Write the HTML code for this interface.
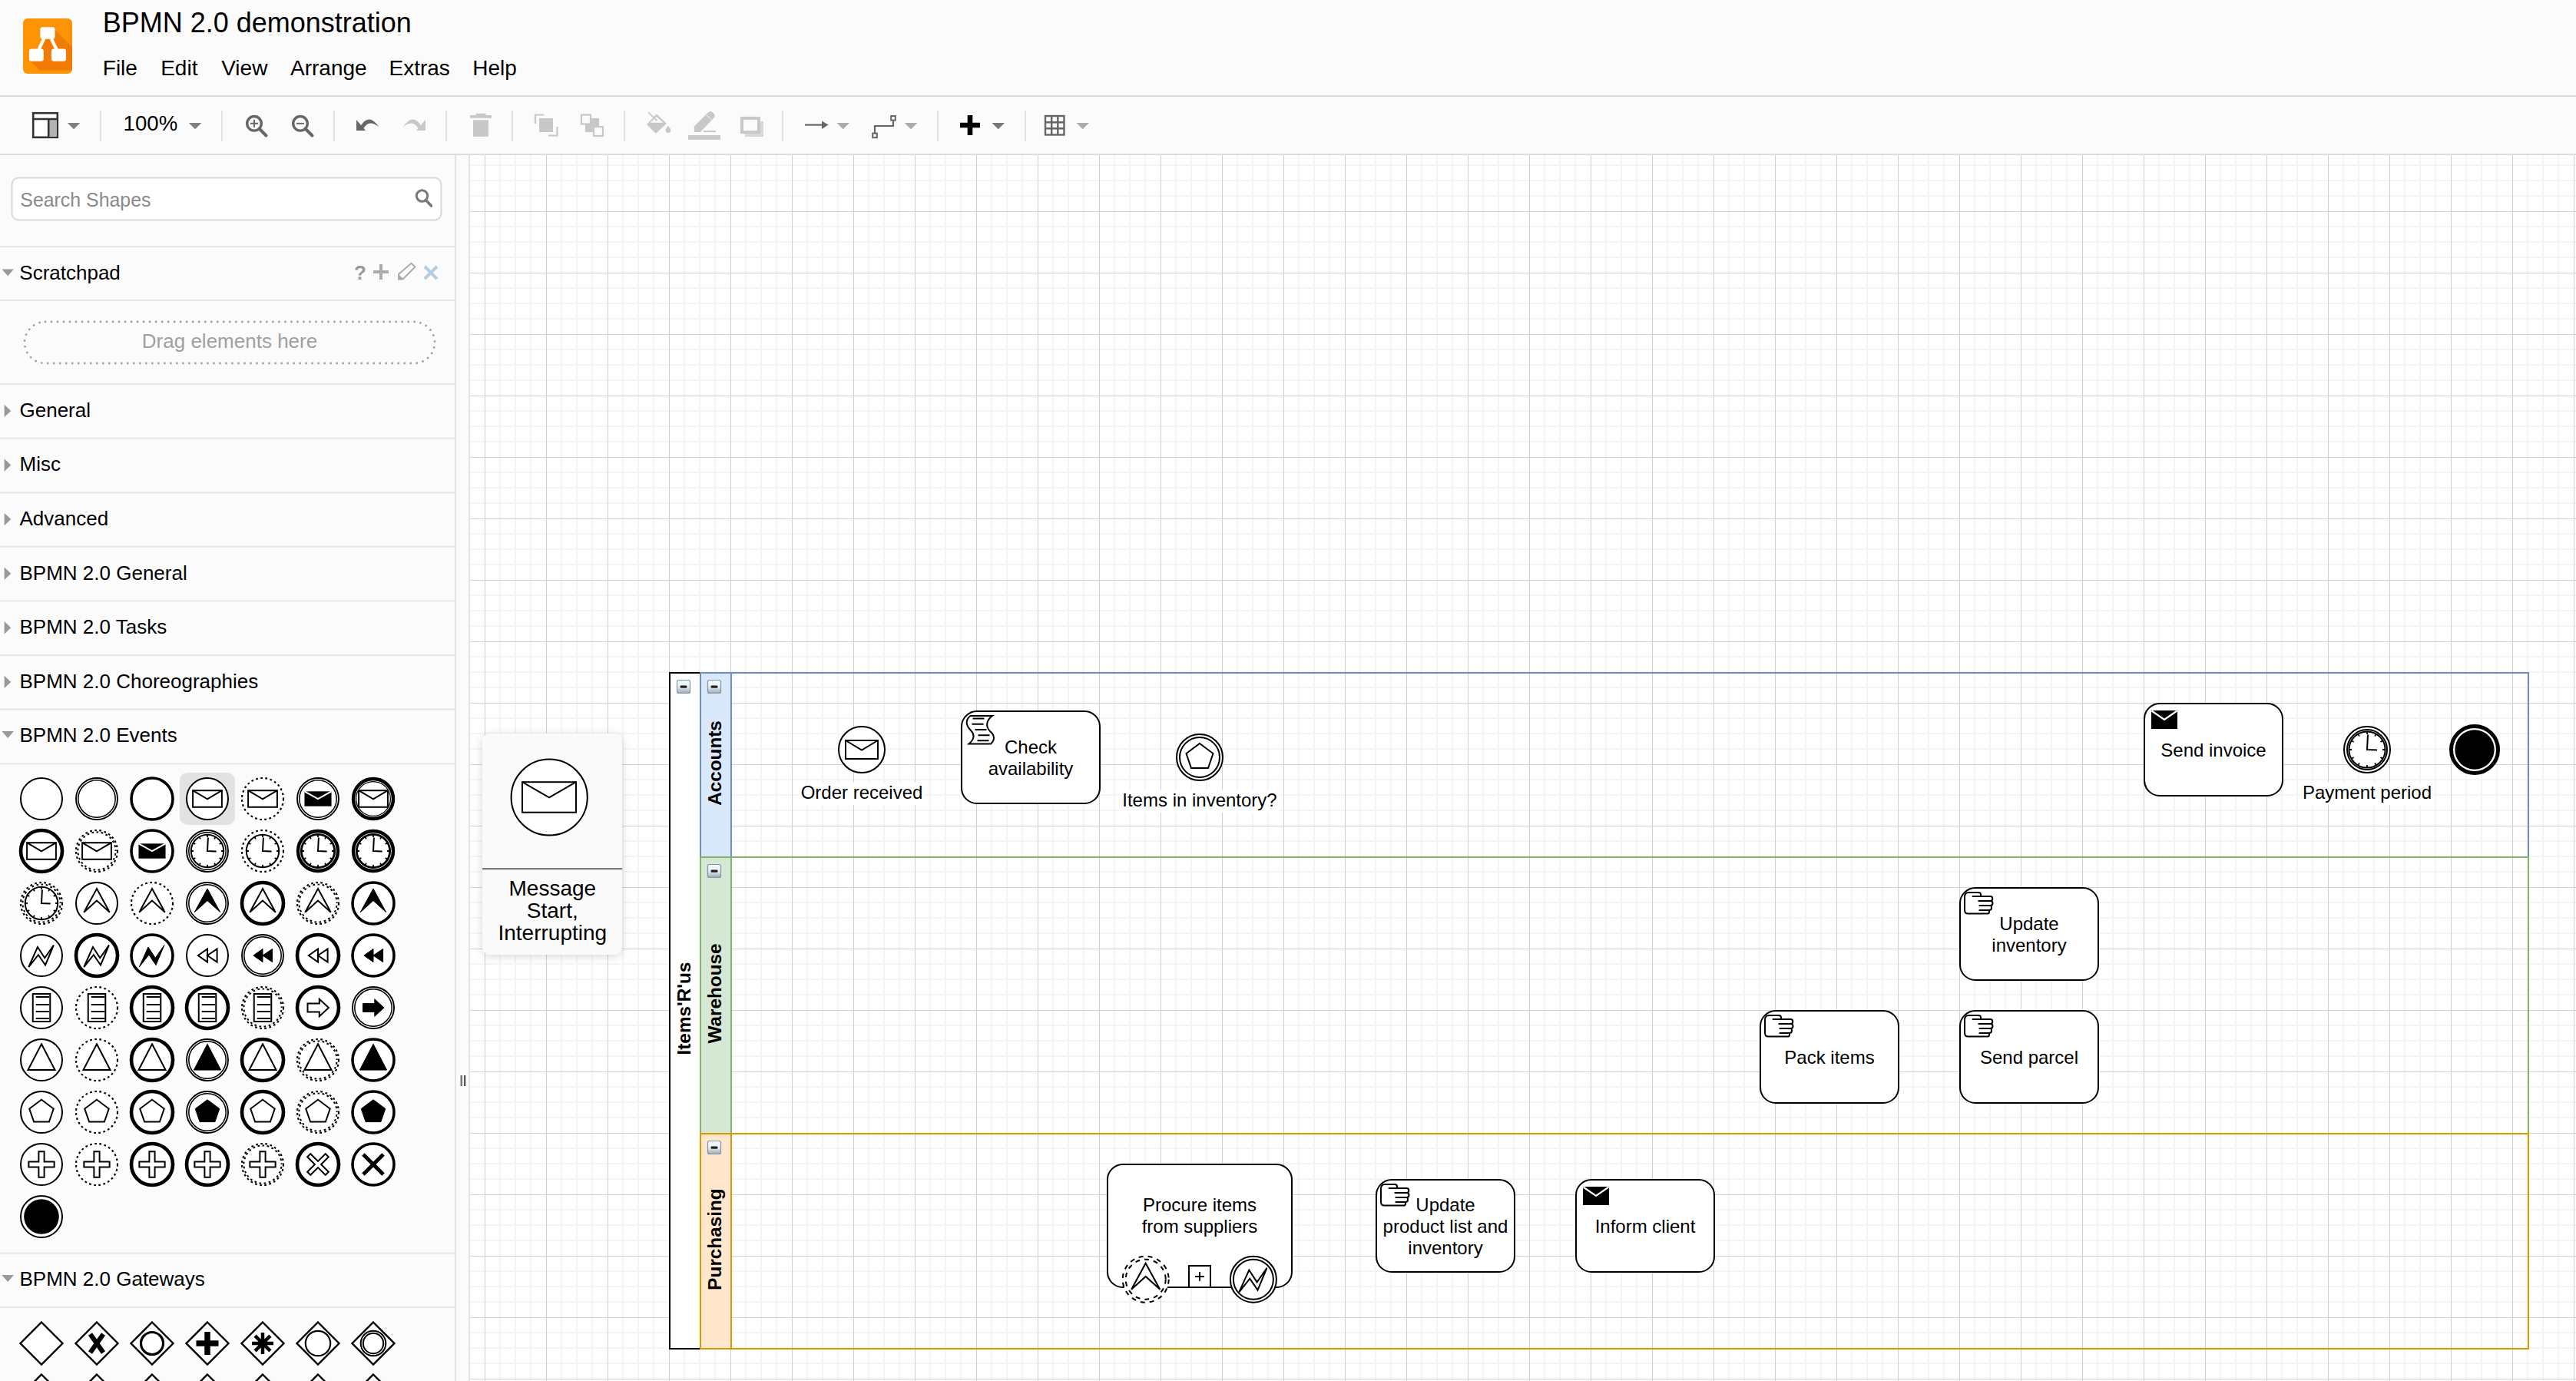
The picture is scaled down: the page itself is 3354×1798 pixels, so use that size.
<!DOCTYPE html><html><head><meta charset="utf-8"><title>BPMN 2.0 demonstration</title><style>html,body{margin:0;padding:0;width:3354px;height:1798px;overflow:hidden;background:#fbfbfb;font-family:"Liberation Sans", sans-serif}</style></head><body><svg width="3354" height="1798" viewBox="0 0 3354 1798" style="display:block;font-family:'Liberation Sans', sans-serif"><rect x="0" y="0" width="3354" height="1798" fill="#fbfbfb"/>
<g><rect x="30" y="24" width="64" height="72" rx="6" ry="6" fill="#fd9305"/><clipPath id="logoclip"><rect x="30" y="24" width="64" height="72" rx="6" ry="6"/></clipPath><polygon clip-path="url(#logoclip)" points="71.5,38.5 94,61 94,91.6 51.8,91.6 37.9,77.7 37.9,63.6 47.5,63.6 55.5,50.8 71.5,50.8" fill="#f07c03"/><path d="M57.2,50.5 L50.4,64.5 M66.8,50.5 L73.8,64.5" stroke="#fff" stroke-width="4.2"/><rect x="52.4" y="35.2" width="19.1" height="15.6" rx="3.2" fill="#fff"/><rect x="37.9" y="63.6" width="18.9" height="16.2" rx="3.2" fill="#fff"/><rect x="66.9" y="63.6" width="19.1" height="16.2" rx="3.2" fill="#fff"/></g>
<text x="133.7" y="41.9" font-size="36" fill="#000" text-anchor="start" font-weight="normal" >BPMN 2.0 demonstration</text>
<text x="133.8" y="98" font-size="28" fill="#000" text-anchor="start" font-weight="normal" >File</text>
<text x="209.2" y="98" font-size="28" fill="#000" text-anchor="start" font-weight="normal" >Edit</text>
<text x="288.2" y="98" font-size="28" fill="#000" text-anchor="start" font-weight="normal" >View</text>
<text x="378" y="98" font-size="28" fill="#000" text-anchor="start" font-weight="normal" >Arrange</text>
<text x="506.5" y="98" font-size="28" fill="#000" text-anchor="start" font-weight="normal" >Extras</text>
<text x="615.2" y="98" font-size="28" fill="#000" text-anchor="start" font-weight="normal" >Help</text>
<rect x="0" y="124" width="3354" height="2" fill="#dadce0"/>
<rect x="0" y="200" width="3354" height="2" fill="#dadce0"/>
<rect x="130" y="144" width="2" height="40" fill="#e2e2e2"/>
<rect x="288" y="144" width="2" height="40" fill="#e2e2e2"/>
<rect x="434" y="144" width="2" height="40" fill="#e2e2e2"/>
<rect x="580" y="144" width="2" height="40" fill="#e2e2e2"/>
<rect x="666" y="144" width="2" height="40" fill="#e2e2e2"/>
<rect x="812" y="144" width="2" height="40" fill="#e2e2e2"/>
<rect x="1018" y="144" width="2" height="40" fill="#e2e2e2"/>
<rect x="1220" y="144" width="2" height="40" fill="#e2e2e2"/>
<rect x="1334" y="144" width="2" height="40" fill="#e2e2e2"/>
<rect x="43.2" y="147.2" width="31.6" height="31.6" fill="#fff" stroke="#333" stroke-width="2.6"/><rect x="64" y="156" width="10" height="22" fill="#b3b3b3"/><path d="M43,155 L75,155 M63.2,155 L63.2,179" stroke="#333" stroke-width="2.6"/>
<polygon points="87.8,160 104.3,160 96.05,168.3" fill="#808080"/>
<text x="160.6" y="170" font-size="27.6" fill="#000" text-anchor="start" font-weight="normal" >100%</text>
<polygon points="245.8,160 262.3,160 254.05,168.3" fill="#808080"/>
<circle cx="331" cy="160.8" r="9.3" fill="none" stroke="#666" stroke-width="3.4"/><path d="M337.5,167.5 L346.5,176.5" stroke="#666" stroke-width="4" stroke-linecap="round"/><path d="M326,160.8 L336,160.8 M331,155.8 L331,165.8" stroke="#666" stroke-width="1.9"/>
<circle cx="391" cy="160.8" r="9.3" fill="none" stroke="#666" stroke-width="3.4"/><path d="M397.5,167.5 L406.5,176.5" stroke="#666" stroke-width="4" stroke-linecap="round"/><path d="M386,160.8 L396,160.8" stroke="#666" stroke-width="1.9"/>
<path d="M464,156 L464,170 L476,170 Z" fill="#666"/><path d="M467.5,168 Q479,144.5 493.5,165.5 Q479,153.5 472,170 Z" fill="#666"/>
<g transform="translate(1078,0) scale(-1,1)"><path d="M524,156 L524,170 L536,170 Z" fill="#c8c8c8"/><path d="M527.5,168 Q539,144.5 553.5,165.5 Q539,153.5 532,170 Z" fill="#c8c8c8"/></g>
<rect x="619.5" y="147.8" width="13" height="3" fill="#c8c8c8"/><rect x="612" y="150" width="28" height="3.8" fill="#c8c8c8"/><rect x="616" y="156.3" width="20" height="21.5" fill="#c8c8c8"/>
<path d="M697,161 L697,149.5 L708.5,149.5 M714,176.5 L725.5,176.5 L725.5,165" fill="none" stroke="#c8c8c8" stroke-width="2.2"/><rect x="702" y="154" width="18" height="18" fill="#c8c8c8"/>
<rect x="762" y="154" width="18" height="18" fill="#c8c8c8"/><rect x="757" y="149.5" width="12" height="12" fill="#fbfbfb" stroke="#c8c8c8" stroke-width="2.2"/><rect x="773" y="165" width="12" height="12" fill="#fbfbfb" stroke="#c8c8c8" stroke-width="2.2"/>
<path d="M842,162 L854.8,148.6 L868,160.8 L853.8,173.7 Z" fill="#c8c8c8"/><path d="M846.5,159.8 L854.8,151.8 L863.6,159.8 Z" fill="#fbfbfb"/><path d="M844.2,146.3 L855.4,157.2" stroke="#c8c8c8" stroke-width="1.8"/><path d="M869.9,163.5 L866.8,168.5 L873,168.5 Z" fill="#c8c8c8"/><circle cx="869.9" cy="169.7" r="3.3" fill="#c8c8c8"/>
<path d="M903.9,172 L903.9,164.4 L921.5,146.8 Q925.2,143.3 928.8,146.9 Q932.3,150.5 928.8,154.2 L911.8,172 Z" fill="#c8c8c8"/><path d="M919.8,149.9 L925.7,155.2" stroke="#fbfbfb" stroke-width="1"/><rect x="896" y="176" width="42" height="5.9" fill="#c8c8c8"/><rect x="916" y="170" width="16" height="2" fill="#c8c8c8"/>
<rect x="970" y="158" width="24" height="20" fill="#d9d9d9"/><rect x="966" y="153.9" width="22" height="18.2" fill="#fbfbfb" stroke="#c8c8c8" stroke-width="4"/>
<path d="M1048,162.6 L1072,162.6" stroke="#666" stroke-width="2.2"/><polygon points="1070,157.5 1078.5,162.6 1070,168" fill="#666"/>
<polygon points="1089.5,160 1106.0,160 1097.75,168.3" fill="#ababab"/>
<path d="M1139,175 L1139,164 L1163,164 L1163,154" fill="none" stroke="#666" stroke-width="2.2"/><rect x="1136.2" y="173.6" width="5.6" height="5.6" fill="#fbfbfb" stroke="#666" stroke-width="2"/><rect x="1160.2" y="151" width="5.6" height="5.6" fill="#fbfbfb" stroke="#666" stroke-width="2"/>
<polygon points="1177.8,160 1194.3,160 1186.05,168.3" fill="#ababab"/>
<path d="M1263,150 L1263,176 M1250,163 L1276,163" stroke="#000" stroke-width="6.6"/>
<polygon points="1291.5,160 1308.0,160 1299.75,168.3" fill="#777"/>
<rect x="1361" y="151" width="24.5" height="24.5" fill="none" stroke="#666" stroke-width="2.4"/><path d="M1369.2,151 L1369.2,175.5 M1377.3,151 L1377.3,175.5 M1361,159.2 L1385.5,159.2 M1361,167.3 L1385.5,167.3" stroke="#666" stroke-width="2.4"/>
<polygon points="1401.5,160 1418.0,160 1409.75,168.3" fill="#ababab"/>
<rect x="592" y="202" width="2" height="1596" fill="#e2e2e2"/>
<rect x="610" y="202" width="2" height="1596" fill="#e5e5e5"/>
<rect x="599.5" y="1400" width="2.6" height="14" fill="#777"/><rect x="604" y="1400" width="2.3" height="14" fill="#555"/>
<rect x="15.5" y="231.5" width="559" height="55" rx="9" fill="#fff" stroke="#d9d9d9" stroke-width="2"/>
<text x="26.3" y="268.6" font-size="24.9" fill="#8a8a8a" text-anchor="start" font-weight="normal" >Search Shapes</text>
<circle cx="549.5" cy="255" r="7.2" fill="none" stroke="#787878" stroke-width="3"/><path d="M554.5,260.5 L561.5,268" stroke="#787878" stroke-width="3.6" stroke-linecap="round"/>
<rect x="0" y="320" width="592" height="2" fill="#e6e6e6"/>
<polygon points="2.4,350.4 18,350.4 10.2,359.3" fill="#999"/>
<text x="25.3" y="364" font-size="26" fill="#000" text-anchor="start" font-weight="normal" >Scratchpad</text>
<text x="461" y="363.8" font-size="26" fill="#999" text-anchor="start" font-weight="bold" >?</text>
<path d="M496,344 L496,364 M486,354 L506,354" stroke="#ababab" stroke-width="4"/>
<path d="M519,363.5 L519,357 L535.5,342.8 L540.5,347.5 L524.5,363.5 Z" fill="none" stroke="#ababab" stroke-width="2"/><path d="M519,357 L519,363.5 L525.5,363.5 Z" fill="#ababab"/>
<path d="M553,347 L569,363 M569,347 L553,363" stroke="#b5cde3" stroke-width="4"/>
<rect x="0" y="390" width="592" height="2" fill="#e6e6e6"/>
<rect x="32" y="419" width="534" height="54" rx="27" fill="none" stroke="#a0a0a0" stroke-width="2.8" stroke-dasharray="0.01 8" stroke-linecap="round"/>
<text x="299" y="452.7" font-size="26" fill="#a0a0a0" text-anchor="middle" font-weight="normal" >Drag elements here</text>
<rect x="0" y="499.0" width="592" height="2" fill="#e6e6e6"/>
<polygon points="5.6,526.7 14.3,534.9 5.6,543.1" fill="#999"/>
<text x="25.5" y="542.8" font-size="26" fill="#000" text-anchor="start" font-weight="normal" >General</text>
<rect x="0" y="569.6" width="592" height="2" fill="#e6e6e6"/>
<polygon points="5.6,597.3000000000001 14.3,605.5 5.6,613.7" fill="#999"/>
<text x="25.5" y="613.4" font-size="26" fill="#000" text-anchor="start" font-weight="normal" >Misc</text>
<rect x="0" y="640.2" width="592" height="2" fill="#e6e6e6"/>
<polygon points="5.6,667.9000000000001 14.3,676.1 5.6,684.3000000000001" fill="#999"/>
<text x="25.5" y="684.0" font-size="26" fill="#000" text-anchor="start" font-weight="normal" >Advanced</text>
<rect x="0" y="710.8" width="592" height="2" fill="#e6e6e6"/>
<polygon points="5.6,738.5 14.3,746.6999999999999 5.6,754.9" fill="#999"/>
<text x="25.5" y="754.6" font-size="26" fill="#000" text-anchor="start" font-weight="normal" >BPMN 2.0 General</text>
<rect x="0" y="781.4" width="592" height="2" fill="#e6e6e6"/>
<polygon points="5.6,809.1 14.3,817.3 5.6,825.5" fill="#999"/>
<text x="25.5" y="825.2" font-size="26" fill="#000" text-anchor="start" font-weight="normal" >BPMN 2.0 Tasks</text>
<rect x="0" y="852.0" width="592" height="2" fill="#e6e6e6"/>
<polygon points="5.6,879.7 14.3,887.9 5.6,896.1" fill="#999"/>
<text x="25.5" y="895.8" font-size="26" fill="#000" text-anchor="start" font-weight="normal" >BPMN 2.0 Choreographies</text>
<rect x="0" y="922.6" width="592" height="2" fill="#e6e6e6"/>
<polygon points="2.4,952.0999999999999 18,952.0999999999999 10.2,960.9999999999999" fill="#999"/>
<text x="25.5" y="966.4" font-size="26" fill="#000" text-anchor="start" font-weight="normal" >BPMN 2.0 Events</text>
<rect x="0" y="993.2" width="592" height="2" fill="#e6e6e6"/>
<rect x="234" y="1006" width="72" height="68" rx="10" fill="#e2e2e2"/>
<circle cx="54.00" cy="1040.00" r="27.00" fill="#fff"/><circle cx="54.00" cy="1040.00" r="27.00" fill="none" stroke="#000" stroke-width="2" />

<circle cx="126.00" cy="1040.00" r="27.00" fill="#fff"/><circle cx="126.00" cy="1040.00" r="27.00" fill="none" stroke="#000" stroke-width="1.9" /><circle cx="126.00" cy="1040.00" r="24.20" fill="none" stroke="#000" stroke-width="1.5" />

<circle cx="198.00" cy="1040.00" r="27.00" fill="#fff"/><circle cx="198.00" cy="1040.00" r="27.00" fill="none" stroke="#000" stroke-width="3.6" />

<circle cx="270.00" cy="1040.00" r="27.00" fill="#fff"/><circle cx="270.00" cy="1040.00" r="27.00" fill="none" stroke="#000" stroke-width="2" />
<rect x="251.10" y="1029.20" width="37.80" height="21.60" fill="none" stroke="#000" stroke-width="2"/><path d="M251.10,1029.20 L270.00,1040.45 L288.90,1029.20" fill="none" stroke="#000" stroke-width="2"/>
<circle cx="342.00" cy="1040.00" r="27.00" fill="#fff"/><circle cx="342.00" cy="1040.00" r="27.00" fill="none" stroke="#000" stroke-width="2.2" stroke-dasharray="2.70 3.50"/>
<rect x="323.10" y="1029.20" width="37.80" height="21.60" fill="none" stroke="#000" stroke-width="2"/><path d="M323.10,1029.20 L342.00,1040.45 L360.90,1029.20" fill="none" stroke="#000" stroke-width="2"/>
<circle cx="414.00" cy="1040.00" r="27.00" fill="#fff"/><circle cx="414.00" cy="1040.00" r="27.00" fill="none" stroke="#000" stroke-width="1.9" /><circle cx="414.00" cy="1040.00" r="24.20" fill="none" stroke="#000" stroke-width="1.5" />
<rect x="396.45" y="1030.33" width="35.10" height="19.35" fill="#000"/><path d="M396.45,1030.33 L414.00,1040.23 L431.55,1030.33" fill="none" stroke="#fff" stroke-width="1.9800000000000002"/>
<circle cx="486.00" cy="1040.00" r="27.00" fill="#fff"/><circle cx="486.00" cy="1040.00" r="26.00" fill="none" stroke="#000" stroke-width="4.4" /><circle cx="486.00" cy="1040.00" r="22.40" fill="none" stroke="#000" stroke-width="1.3" />
<rect x="467.10" y="1029.20" width="37.80" height="21.60" fill="none" stroke="#000" stroke-width="2"/><path d="M467.10,1029.20 L486.00,1040.45 L504.90,1029.20" fill="none" stroke="#000" stroke-width="2"/>
<circle cx="54.00" cy="1108.00" r="27.00" fill="#fff"/><circle cx="54.00" cy="1108.00" r="27.00" fill="none" stroke="#000" stroke-width="4.6" />
<rect x="35.10" y="1097.20" width="37.80" height="21.60" fill="none" stroke="#000" stroke-width="2"/><path d="M35.10,1097.20 L54.00,1108.45 L72.90,1097.20" fill="none" stroke="#000" stroke-width="2"/>
<circle cx="126.00" cy="1108.00" r="27.00" fill="#fff"/><circle cx="126.00" cy="1108.00" r="27.00" fill="none" stroke="#000" stroke-width="2.2" stroke-dasharray="2.70 3.50"/><circle cx="126.00" cy="1108.00" r="24.60" fill="none" stroke="#000" stroke-width="2" stroke-dasharray="2.70 3.50" stroke-dashoffset="3.10"/>
<rect x="107.10" y="1097.20" width="37.80" height="21.60" fill="none" stroke="#000" stroke-width="2"/><path d="M107.10,1097.20 L126.00,1108.45 L144.90,1097.20" fill="none" stroke="#000" stroke-width="2"/>
<circle cx="198.00" cy="1108.00" r="27.00" fill="#fff"/><circle cx="198.00" cy="1108.00" r="27.00" fill="none" stroke="#000" stroke-width="3.6" />
<rect x="180.45" y="1098.33" width="35.10" height="19.35" fill="#000"/><path d="M180.45,1098.33 L198.00,1108.23 L215.55,1098.33" fill="none" stroke="#fff" stroke-width="1.9800000000000002"/>
<circle cx="270.00" cy="1108.00" r="27.00" fill="#fff"/><circle cx="270.00" cy="1108.00" r="27.00" fill="none" stroke="#000" stroke-width="1.9" /><circle cx="270.00" cy="1108.00" r="24.20" fill="none" stroke="#000" stroke-width="1.5" />
<circle cx="270.00" cy="1108.00" r="21.24" fill="#fff" stroke="#000" stroke-width="2"/><path d="M291.24,1108.00 L288.09,1108.00 M288.39,1118.62 L285.67,1117.05 M280.62,1126.39 L279.05,1123.67 M270.00,1129.24 L270.00,1126.09 M259.38,1126.39 L260.95,1123.67 M251.61,1118.62 L254.33,1117.05 M248.76,1108.00 L251.91,1108.00 M251.61,1097.38 L254.33,1098.95 M259.38,1089.61 L260.95,1092.33 M270.00,1086.76 L270.00,1089.91 M280.62,1089.61 L279.05,1092.33 M288.39,1097.38 L285.67,1098.95" stroke="#000" stroke-width="1.8"/><path d="M270.90,1090.45 L270.00,1108.00 L281.70,1108.45" fill="none" stroke="#000" stroke-width="2"/>
<circle cx="342.00" cy="1108.00" r="27.00" fill="#fff"/><circle cx="342.00" cy="1108.00" r="27.00" fill="none" stroke="#000" stroke-width="2.2" stroke-dasharray="2.70 3.50"/>
<circle cx="342.00" cy="1108.00" r="21.24" fill="#fff" stroke="#000" stroke-width="2"/><path d="M363.24,1108.00 L360.09,1108.00 M360.39,1118.62 L357.67,1117.05 M352.62,1126.39 L351.05,1123.67 M342.00,1129.24 L342.00,1126.09 M331.38,1126.39 L332.95,1123.67 M323.61,1118.62 L326.33,1117.05 M320.76,1108.00 L323.91,1108.00 M323.61,1097.38 L326.33,1098.95 M331.38,1089.61 L332.95,1092.33 M342.00,1086.76 L342.00,1089.91 M352.62,1089.61 L351.05,1092.33 M360.39,1097.38 L357.67,1098.95" stroke="#000" stroke-width="1.8"/><path d="M342.90,1090.45 L342.00,1108.00 L353.70,1108.45" fill="none" stroke="#000" stroke-width="2"/>
<circle cx="414.00" cy="1108.00" r="27.00" fill="#fff"/><circle cx="414.00" cy="1108.00" r="26.00" fill="none" stroke="#000" stroke-width="4.4" /><circle cx="414.00" cy="1108.00" r="22.40" fill="none" stroke="#000" stroke-width="1.3" />
<circle cx="414.00" cy="1108.00" r="21.24" fill="#fff" stroke="#000" stroke-width="2"/><path d="M435.24,1108.00 L432.09,1108.00 M432.39,1118.62 L429.67,1117.05 M424.62,1126.39 L423.05,1123.67 M414.00,1129.24 L414.00,1126.09 M403.38,1126.39 L404.95,1123.67 M395.61,1118.62 L398.33,1117.05 M392.76,1108.00 L395.91,1108.00 M395.61,1097.38 L398.33,1098.95 M403.38,1089.61 L404.95,1092.33 M414.00,1086.76 L414.00,1089.91 M424.62,1089.61 L423.05,1092.33 M432.39,1097.38 L429.67,1098.95" stroke="#000" stroke-width="1.8"/><path d="M414.90,1090.45 L414.00,1108.00 L425.70,1108.45" fill="none" stroke="#000" stroke-width="2"/>
<circle cx="486.00" cy="1108.00" r="27.00" fill="#fff"/><circle cx="486.00" cy="1108.00" r="26.00" fill="none" stroke="#000" stroke-width="4.4" /><circle cx="486.00" cy="1108.00" r="22.40" fill="none" stroke="#000" stroke-width="1.3" />
<circle cx="486.00" cy="1108.00" r="21.24" fill="#fff" stroke="#000" stroke-width="2"/><path d="M507.24,1108.00 L504.09,1108.00 M504.39,1118.62 L501.67,1117.05 M496.62,1126.39 L495.05,1123.67 M486.00,1129.24 L486.00,1126.09 M475.38,1126.39 L476.95,1123.67 M467.61,1118.62 L470.33,1117.05 M464.76,1108.00 L467.91,1108.00 M467.61,1097.38 L470.33,1098.95 M475.38,1089.61 L476.95,1092.33 M486.00,1086.76 L486.00,1089.91 M496.62,1089.61 L495.05,1092.33 M504.39,1097.38 L501.67,1098.95" stroke="#000" stroke-width="1.8"/><path d="M486.90,1090.45 L486.00,1108.00 L497.70,1108.45" fill="none" stroke="#000" stroke-width="2"/>
<circle cx="54.00" cy="1176.00" r="27.00" fill="#fff"/><circle cx="54.00" cy="1176.00" r="27.00" fill="none" stroke="#000" stroke-width="2.2" stroke-dasharray="2.70 3.50"/><circle cx="54.00" cy="1176.00" r="24.60" fill="none" stroke="#000" stroke-width="2" stroke-dasharray="2.70 3.50" stroke-dashoffset="3.10"/>
<circle cx="54.00" cy="1176.00" r="21.24" fill="#fff" stroke="#000" stroke-width="2"/><path d="M75.24,1176.00 L72.09,1176.00 M72.39,1186.62 L69.67,1185.05 M64.62,1194.39 L63.05,1191.67 M54.00,1197.24 L54.00,1194.09 M43.38,1194.39 L44.95,1191.67 M35.61,1186.62 L38.33,1185.05 M32.76,1176.00 L35.91,1176.00 M35.61,1165.38 L38.33,1166.95 M43.38,1157.61 L44.95,1160.33 M54.00,1154.76 L54.00,1157.91 M64.62,1157.61 L63.05,1160.33 M72.39,1165.38 L69.67,1166.95" stroke="#000" stroke-width="1.8"/><path d="M54.90,1158.45 L54.00,1176.00 L65.70,1176.45" fill="none" stroke="#000" stroke-width="2"/>
<circle cx="126.00" cy="1176.00" r="27.00" fill="#fff"/><circle cx="126.00" cy="1176.00" r="27.00" fill="none" stroke="#000" stroke-width="2" />
<polygon points="126.00,1157.10 142.74,1187.70 126.00,1172.58 109.26,1187.70" fill="none" stroke="#000" stroke-width="2" stroke-linejoin="miter"/>
<circle cx="198.00" cy="1176.00" r="27.00" fill="#fff"/><circle cx="198.00" cy="1176.00" r="27.00" fill="none" stroke="#000" stroke-width="2.2" stroke-dasharray="2.70 3.50"/>
<polygon points="198.00,1157.10 214.74,1187.70 198.00,1172.58 181.26,1187.70" fill="none" stroke="#000" stroke-width="2" stroke-linejoin="miter"/>
<circle cx="270.00" cy="1176.00" r="27.00" fill="#fff"/><circle cx="270.00" cy="1176.00" r="27.00" fill="none" stroke="#000" stroke-width="1.9" /><circle cx="270.00" cy="1176.00" r="24.20" fill="none" stroke="#000" stroke-width="1.5" />
<polygon points="270.00,1157.10 286.74,1187.70 270.00,1172.58 253.26,1187.70" fill="#000" stroke="#000" stroke-width="1.0"/>
<circle cx="342.00" cy="1176.00" r="27.00" fill="#fff"/><circle cx="342.00" cy="1176.00" r="27.00" fill="none" stroke="#000" stroke-width="4.6" />
<polygon points="342.00,1157.10 358.74,1187.70 342.00,1172.58 325.26,1187.70" fill="none" stroke="#000" stroke-width="2" stroke-linejoin="miter"/>
<circle cx="414.00" cy="1176.00" r="27.00" fill="#fff"/><circle cx="414.00" cy="1176.00" r="27.00" fill="none" stroke="#000" stroke-width="2.2" stroke-dasharray="2.70 3.50"/><circle cx="414.00" cy="1176.00" r="24.60" fill="none" stroke="#000" stroke-width="2" stroke-dasharray="2.70 3.50" stroke-dashoffset="3.10"/>
<polygon points="414.00,1157.10 430.74,1187.70 414.00,1172.58 397.26,1187.70" fill="none" stroke="#000" stroke-width="2" stroke-linejoin="miter"/>
<circle cx="486.00" cy="1176.00" r="27.00" fill="#fff"/><circle cx="486.00" cy="1176.00" r="27.00" fill="none" stroke="#000" stroke-width="3.6" />
<polygon points="486.00,1157.10 502.74,1187.70 486.00,1172.58 469.26,1187.70" fill="#000" stroke="#000" stroke-width="1.0"/>
<circle cx="54.00" cy="1244.00" r="27.00" fill="#fff"/><circle cx="54.00" cy="1244.00" r="27.00" fill="none" stroke="#000" stroke-width="2" />
<polygon points="37.26,1259.03 48.96,1233.02 58.23,1247.33 69.93,1230.50 59.04,1256.51 49.86,1243.10" fill="none" stroke="#000" stroke-width="2" stroke-linejoin="miter"/>
<circle cx="126.00" cy="1244.00" r="27.00" fill="#fff"/><circle cx="126.00" cy="1244.00" r="27.00" fill="none" stroke="#000" stroke-width="4.6" />
<polygon points="109.26,1259.03 120.96,1233.02 130.23,1247.33 141.93,1230.50 131.04,1256.51 121.86,1243.10" fill="none" stroke="#000" stroke-width="2" stroke-linejoin="miter"/>
<circle cx="198.00" cy="1244.00" r="27.00" fill="#fff"/><circle cx="198.00" cy="1244.00" r="27.00" fill="none" stroke="#000" stroke-width="3.6" />
<polygon points="181.26,1259.03 192.96,1233.02 202.23,1247.33 213.93,1230.50 203.04,1256.51 193.86,1243.10" fill="#000" stroke="#000" stroke-width="1.0"/>
<circle cx="270.00" cy="1244.00" r="27.00" fill="#fff"/><circle cx="270.00" cy="1244.00" r="27.00" fill="none" stroke="#000" stroke-width="2" />
<polygon points="257.85,1244.00 270.00,1235.45 270.00,1252.55" fill="none" stroke="#000" stroke-width="2" stroke-linejoin="miter"/><polygon points="270.00,1244.00 282.60,1235.45 282.60,1252.55" fill="none" stroke="#000" stroke-width="2" stroke-linejoin="miter"/>
<circle cx="342.00" cy="1244.00" r="27.00" fill="#fff"/><circle cx="342.00" cy="1244.00" r="27.00" fill="none" stroke="#000" stroke-width="1.9" /><circle cx="342.00" cy="1244.00" r="24.20" fill="none" stroke="#000" stroke-width="1.5" />
<polygon points="329.85,1244.00 342.00,1235.45 342.00,1252.55" fill="#000" stroke="#000" stroke-width="1.0"/><polygon points="342.00,1244.00 354.60,1235.45 354.60,1252.55" fill="#000" stroke="#000" stroke-width="1.0"/>
<circle cx="414.00" cy="1244.00" r="27.00" fill="#fff"/><circle cx="414.00" cy="1244.00" r="27.00" fill="none" stroke="#000" stroke-width="4.6" />
<polygon points="401.85,1244.00 414.00,1235.45 414.00,1252.55" fill="none" stroke="#000" stroke-width="2" stroke-linejoin="miter"/><polygon points="414.00,1244.00 426.60,1235.45 426.60,1252.55" fill="none" stroke="#000" stroke-width="2" stroke-linejoin="miter"/>
<circle cx="486.00" cy="1244.00" r="27.00" fill="#fff"/><circle cx="486.00" cy="1244.00" r="27.00" fill="none" stroke="#000" stroke-width="3.6" />
<polygon points="473.85,1244.00 486.00,1235.45 486.00,1252.55" fill="#000" stroke="#000" stroke-width="1.0"/><polygon points="486.00,1244.00 498.60,1235.45 498.60,1252.55" fill="#000" stroke="#000" stroke-width="1.0"/>
<circle cx="54.00" cy="1312.00" r="27.00" fill="#fff"/><circle cx="54.00" cy="1312.00" r="27.00" fill="none" stroke="#000" stroke-width="2" />
<rect x="42.75" y="1294.00" width="22.50" height="36.00" fill="none" stroke="#000" stroke-width="2"/><path d="M46.80,1298.05 L63.90,1298.05 M46.80,1307.95 L63.90,1307.95 M46.80,1316.95 L63.90,1316.95 M46.80,1325.95 L63.90,1325.95" stroke="#000" stroke-width="2"/>
<circle cx="126.00" cy="1312.00" r="27.00" fill="#fff"/><circle cx="126.00" cy="1312.00" r="27.00" fill="none" stroke="#000" stroke-width="2.2" stroke-dasharray="2.70 3.50"/>
<rect x="114.75" y="1294.00" width="22.50" height="36.00" fill="none" stroke="#000" stroke-width="2"/><path d="M118.80,1298.05 L135.90,1298.05 M118.80,1307.95 L135.90,1307.95 M118.80,1316.95 L135.90,1316.95 M118.80,1325.95 L135.90,1325.95" stroke="#000" stroke-width="2"/>
<circle cx="198.00" cy="1312.00" r="27.00" fill="#fff"/><circle cx="198.00" cy="1312.00" r="27.00" fill="none" stroke="#000" stroke-width="4.6" />
<rect x="186.75" y="1294.00" width="22.50" height="36.00" fill="none" stroke="#000" stroke-width="2"/><path d="M190.80,1298.05 L207.90,1298.05 M190.80,1307.95 L207.90,1307.95 M190.80,1316.95 L207.90,1316.95 M190.80,1325.95 L207.90,1325.95" stroke="#000" stroke-width="2"/>
<circle cx="270.00" cy="1312.00" r="27.00" fill="#fff"/><circle cx="270.00" cy="1312.00" r="27.00" fill="none" stroke="#000" stroke-width="4.6" />
<rect x="258.75" y="1294.00" width="22.50" height="36.00" fill="none" stroke="#000" stroke-width="2"/><path d="M262.80,1298.05 L279.90,1298.05 M262.80,1307.95 L279.90,1307.95 M262.80,1316.95 L279.90,1316.95 M262.80,1325.95 L279.90,1325.95" stroke="#000" stroke-width="2"/>
<circle cx="342.00" cy="1312.00" r="27.00" fill="#fff"/><circle cx="342.00" cy="1312.00" r="27.00" fill="none" stroke="#000" stroke-width="2.2" stroke-dasharray="2.70 3.50"/><circle cx="342.00" cy="1312.00" r="24.60" fill="none" stroke="#000" stroke-width="2" stroke-dasharray="2.70 3.50" stroke-dashoffset="3.10"/>
<rect x="330.75" y="1294.00" width="22.50" height="36.00" fill="none" stroke="#000" stroke-width="2"/><path d="M334.80,1298.05 L351.90,1298.05 M334.80,1307.95 L351.90,1307.95 M334.80,1316.95 L351.90,1316.95 M334.80,1325.95 L351.90,1325.95" stroke="#000" stroke-width="2"/>
<circle cx="414.00" cy="1312.00" r="27.00" fill="#fff"/><circle cx="414.00" cy="1312.00" r="27.00" fill="none" stroke="#000" stroke-width="4.6" />
<polygon points="400.50,1306.60 415.80,1306.60 415.80,1300.75 427.95,1312.00 415.80,1323.25 415.80,1317.40 400.50,1317.40" fill="none" stroke="#000" stroke-width="2" stroke-linejoin="miter"/>
<circle cx="486.00" cy="1312.00" r="27.00" fill="#fff"/><circle cx="486.00" cy="1312.00" r="27.00" fill="none" stroke="#000" stroke-width="1.9" /><circle cx="486.00" cy="1312.00" r="24.20" fill="none" stroke="#000" stroke-width="1.5" />
<polygon points="472.50,1306.60 487.80,1306.60 487.80,1300.75 499.95,1312.00 487.80,1323.25 487.80,1317.40 472.50,1317.40" fill="#000" stroke="#000" stroke-width="1.0"/>
<circle cx="54.00" cy="1380.00" r="27.00" fill="#fff"/><circle cx="54.00" cy="1380.00" r="27.00" fill="none" stroke="#000" stroke-width="2" />
<polygon points="54.00,1359.30 71.55,1393.05 36.45,1393.05" fill="none" stroke="#000" stroke-width="2" stroke-linejoin="miter"/>
<circle cx="126.00" cy="1380.00" r="27.00" fill="#fff"/><circle cx="126.00" cy="1380.00" r="27.00" fill="none" stroke="#000" stroke-width="2.2" stroke-dasharray="2.70 3.50"/>
<polygon points="126.00,1359.30 143.55,1393.05 108.45,1393.05" fill="none" stroke="#000" stroke-width="2" stroke-linejoin="miter"/>
<circle cx="198.00" cy="1380.00" r="27.00" fill="#fff"/><circle cx="198.00" cy="1380.00" r="27.00" fill="none" stroke="#000" stroke-width="4.6" />
<polygon points="198.00,1359.30 215.55,1393.05 180.45,1393.05" fill="none" stroke="#000" stroke-width="2" stroke-linejoin="miter"/>
<circle cx="270.00" cy="1380.00" r="27.00" fill="#fff"/><circle cx="270.00" cy="1380.00" r="27.00" fill="none" stroke="#000" stroke-width="1.9" /><circle cx="270.00" cy="1380.00" r="24.20" fill="none" stroke="#000" stroke-width="1.5" />
<polygon points="270.00,1359.30 287.55,1393.05 252.45,1393.05" fill="#000" stroke="#000" stroke-width="1.0"/>
<circle cx="342.00" cy="1380.00" r="27.00" fill="#fff"/><circle cx="342.00" cy="1380.00" r="27.00" fill="none" stroke="#000" stroke-width="4.6" />
<polygon points="342.00,1359.30 359.55,1393.05 324.45,1393.05" fill="none" stroke="#000" stroke-width="2" stroke-linejoin="miter"/>
<circle cx="414.00" cy="1380.00" r="27.00" fill="#fff"/><circle cx="414.00" cy="1380.00" r="27.00" fill="none" stroke="#000" stroke-width="2.2" stroke-dasharray="2.70 3.50"/><circle cx="414.00" cy="1380.00" r="24.60" fill="none" stroke="#000" stroke-width="2" stroke-dasharray="2.70 3.50" stroke-dashoffset="3.10"/>
<polygon points="414.00,1359.30 431.55,1393.05 396.45,1393.05" fill="none" stroke="#000" stroke-width="2" stroke-linejoin="miter"/>
<circle cx="486.00" cy="1380.00" r="27.00" fill="#fff"/><circle cx="486.00" cy="1380.00" r="27.00" fill="none" stroke="#000" stroke-width="3.6" />
<polygon points="486.00,1359.30 503.55,1393.05 468.45,1393.05" fill="#000" stroke="#000" stroke-width="1.0"/>
<circle cx="54.00" cy="1448.00" r="27.00" fill="#fff"/><circle cx="54.00" cy="1448.00" r="27.00" fill="none" stroke="#000" stroke-width="2" />
<polygon points="54.00,1431.80 69.75,1443.50 63.90,1460.60 44.10,1460.60 38.25,1443.50" fill="none" stroke="#000" stroke-width="2" stroke-linejoin="miter"/>
<circle cx="126.00" cy="1448.00" r="27.00" fill="#fff"/><circle cx="126.00" cy="1448.00" r="27.00" fill="none" stroke="#000" stroke-width="2.2" stroke-dasharray="2.70 3.50"/>
<polygon points="126.00,1431.80 141.75,1443.50 135.90,1460.60 116.10,1460.60 110.25,1443.50" fill="none" stroke="#000" stroke-width="2" stroke-linejoin="miter"/>
<circle cx="198.00" cy="1448.00" r="27.00" fill="#fff"/><circle cx="198.00" cy="1448.00" r="27.00" fill="none" stroke="#000" stroke-width="4.6" />
<polygon points="198.00,1431.80 213.75,1443.50 207.90,1460.60 188.10,1460.60 182.25,1443.50" fill="none" stroke="#000" stroke-width="2" stroke-linejoin="miter"/>
<circle cx="270.00" cy="1448.00" r="27.00" fill="#fff"/><circle cx="270.00" cy="1448.00" r="27.00" fill="none" stroke="#000" stroke-width="1.9" /><circle cx="270.00" cy="1448.00" r="24.20" fill="none" stroke="#000" stroke-width="1.5" />
<polygon points="270.00,1431.80 285.75,1443.50 279.90,1460.60 260.10,1460.60 254.25,1443.50" fill="#000" stroke="#000" stroke-width="1.0"/>
<circle cx="342.00" cy="1448.00" r="27.00" fill="#fff"/><circle cx="342.00" cy="1448.00" r="27.00" fill="none" stroke="#000" stroke-width="4.6" />
<polygon points="342.00,1431.80 357.75,1443.50 351.90,1460.60 332.10,1460.60 326.25,1443.50" fill="none" stroke="#000" stroke-width="2" stroke-linejoin="miter"/>
<circle cx="414.00" cy="1448.00" r="27.00" fill="#fff"/><circle cx="414.00" cy="1448.00" r="27.00" fill="none" stroke="#000" stroke-width="2.2" stroke-dasharray="2.70 3.50"/><circle cx="414.00" cy="1448.00" r="24.60" fill="none" stroke="#000" stroke-width="2" stroke-dasharray="2.70 3.50" stroke-dashoffset="3.10"/>
<polygon points="414.00,1431.80 429.75,1443.50 423.90,1460.60 404.10,1460.60 398.25,1443.50" fill="none" stroke="#000" stroke-width="2" stroke-linejoin="miter"/>
<circle cx="486.00" cy="1448.00" r="27.00" fill="#fff"/><circle cx="486.00" cy="1448.00" r="27.00" fill="none" stroke="#000" stroke-width="3.6" />
<polygon points="486.00,1431.80 501.75,1443.50 495.90,1460.60 476.10,1460.60 470.25,1443.50" fill="#000" stroke="#000" stroke-width="1.0"/>
<circle cx="54.00" cy="1516.00" r="27.00" fill="#fff"/><circle cx="54.00" cy="1516.00" r="27.00" fill="none" stroke="#000" stroke-width="2" />
<polygon points="50.40,1499.35 57.60,1499.35 57.60,1512.40 70.65,1512.40 70.65,1519.60 57.60,1519.60 57.60,1532.65 50.40,1532.65 50.40,1519.60 37.35,1519.60 37.35,1512.40 50.40,1512.40" fill="none" stroke="#000" stroke-width="2" stroke-linejoin="miter"/>
<circle cx="126.00" cy="1516.00" r="27.00" fill="#fff"/><circle cx="126.00" cy="1516.00" r="27.00" fill="none" stroke="#000" stroke-width="2.2" stroke-dasharray="2.70 3.50"/>
<polygon points="122.40,1499.35 129.60,1499.35 129.60,1512.40 142.65,1512.40 142.65,1519.60 129.60,1519.60 129.60,1532.65 122.40,1532.65 122.40,1519.60 109.35,1519.60 109.35,1512.40 122.40,1512.40" fill="none" stroke="#000" stroke-width="2" stroke-linejoin="miter"/>
<circle cx="198.00" cy="1516.00" r="27.00" fill="#fff"/><circle cx="198.00" cy="1516.00" r="27.00" fill="none" stroke="#000" stroke-width="4.6" />
<polygon points="194.40,1499.35 201.60,1499.35 201.60,1512.40 214.65,1512.40 214.65,1519.60 201.60,1519.60 201.60,1532.65 194.40,1532.65 194.40,1519.60 181.35,1519.60 181.35,1512.40 194.40,1512.40" fill="none" stroke="#000" stroke-width="2" stroke-linejoin="miter"/>
<circle cx="270.00" cy="1516.00" r="27.00" fill="#fff"/><circle cx="270.00" cy="1516.00" r="27.00" fill="none" stroke="#000" stroke-width="4.6" />
<polygon points="266.40,1499.35 273.60,1499.35 273.60,1512.40 286.65,1512.40 286.65,1519.60 273.60,1519.60 273.60,1532.65 266.40,1532.65 266.40,1519.60 253.35,1519.60 253.35,1512.40 266.40,1512.40" fill="none" stroke="#000" stroke-width="2" stroke-linejoin="miter"/>
<circle cx="342.00" cy="1516.00" r="27.00" fill="#fff"/><circle cx="342.00" cy="1516.00" r="27.00" fill="none" stroke="#000" stroke-width="2.2" stroke-dasharray="2.70 3.50"/><circle cx="342.00" cy="1516.00" r="24.60" fill="none" stroke="#000" stroke-width="2" stroke-dasharray="2.70 3.50" stroke-dashoffset="3.10"/>
<polygon points="338.40,1499.35 345.60,1499.35 345.60,1512.40 358.65,1512.40 358.65,1519.60 345.60,1519.60 345.60,1532.65 338.40,1532.65 338.40,1519.60 325.35,1519.60 325.35,1512.40 338.40,1512.40" fill="none" stroke="#000" stroke-width="2" stroke-linejoin="miter"/>
<circle cx="414.00" cy="1516.00" r="27.00" fill="#fff"/><circle cx="414.00" cy="1516.00" r="27.00" fill="none" stroke="#000" stroke-width="4.6" />
<g transform="translate(414.00,1516.00) rotate(45) scale(0.9)"><polygon points="-3.20,-18.50 3.20,-18.50 3.20,-3.20 18.50,-3.20 18.50,3.20 3.20,3.20 3.20,18.50 -3.20,18.50 -3.20,3.20 -18.50,3.20 -18.50,-3.20 -3.20,-3.20" fill="none" stroke="#000" stroke-width="2.2222222222222223"/></g>
<circle cx="486.00" cy="1516.00" r="27.00" fill="#fff"/><circle cx="486.00" cy="1516.00" r="27.00" fill="none" stroke="#000" stroke-width="3.6" />
<path d="M472.95,1502.95 L499.05,1529.05 M499.05,1502.95 L472.95,1529.05" stroke="#000" stroke-width="4.95"/>
<circle cx="54" cy="1584" r="27" fill="#fff" stroke="#000" stroke-width="2"/><circle cx="54" cy="1584" r="22.8" fill="#000"/>
<rect x="0" y="1630.6" width="592" height="2" fill="#e6e6e6"/>
<polygon points="2.4,1660.1 18,1660.1 10.2,1669" fill="#999"/>
<text x="25.5" y="1674.4" font-size="26" fill="#000" text-anchor="start" font-weight="normal" >BPMN 2.0 Gateways</text>
<rect x="0" y="1701" width="592" height="2" fill="#e6e6e6"/>
<polygon points="54,1721.5 81.5,1749 54,1776.5 26.5,1749" fill="#fff" stroke="#000" stroke-width="2.4"/>
<polygon points="126,1721.5 153.5,1749 126,1776.5 98.5,1749" fill="#fff" stroke="#000" stroke-width="2.4"/>
<path d="M117.5,1737 L134.5,1761 M134.5,1737 L117.5,1761" stroke="#000" stroke-width="6.2"/>
<polygon points="198,1721.5 225.5,1749 198,1776.5 170.5,1749" fill="#fff" stroke="#000" stroke-width="2.4"/>
<circle cx="198" cy="1749" r="14.5" fill="none" stroke="#000" stroke-width="3.2"/>
<polygon points="270,1721.5 297.5,1749 270,1776.5 242.5,1749" fill="#fff" stroke="#000" stroke-width="2.4"/>
<path d="M270,1734 L270,1764 M255.5,1749 L284.5,1749" stroke="#000" stroke-width="7.5"/>
<polygon points="342,1721.5 369.5,1749 342,1776.5 314.5,1749" fill="#fff" stroke="#000" stroke-width="2.4"/>
<path d="M356.00,1749.00 L328.00,1749.00 M351.90,1758.90 L332.10,1739.10 M342.00,1763.00 L342.00,1735.00 M332.10,1758.90 L351.90,1739.10" stroke="#000" stroke-width="4.5"/>
<polygon points="414,1721.5 441.5,1749 414,1776.5 386.5,1749" fill="#fff" stroke="#000" stroke-width="2.4"/>
<circle cx="414" cy="1749" r="16.2" fill="none" stroke="#000" stroke-width="2.2"/>
<polygon points="486,1721.5 513.5,1749 486,1776.5 458.5,1749" fill="#fff" stroke="#000" stroke-width="2.4"/>
<circle cx="486" cy="1749" r="16.3" fill="none" stroke="#000" stroke-width="2"/><circle cx="486" cy="1749" r="13.2" fill="none" stroke="#000" stroke-width="2"/>
<polygon points="54,1789.5 81.5,1817 54,1844.5 26.5,1817" fill="#fff" stroke="#000" stroke-width="2.4"/>
<polygon points="126,1789.5 153.5,1817 126,1844.5 98.5,1817" fill="#fff" stroke="#000" stroke-width="2.4"/>
<polygon points="198,1789.5 225.5,1817 198,1844.5 170.5,1817" fill="#fff" stroke="#000" stroke-width="2.4"/>
<polygon points="270,1789.5 297.5,1817 270,1844.5 242.5,1817" fill="#fff" stroke="#000" stroke-width="2.4"/>
<polygon points="342,1789.5 369.5,1817 342,1844.5 314.5,1817" fill="#fff" stroke="#000" stroke-width="2.4"/>
<polygon points="414,1789.5 441.5,1817 414,1844.5 386.5,1817" fill="#fff" stroke="#000" stroke-width="2.4"/>
<polygon points="486,1789.5 513.5,1817 486,1844.5 458.5,1817" fill="#fff" stroke="#000" stroke-width="2.4"/>
<rect x="612" y="202" width="2742" height="1596" fill="#fff"/>
<defs><pattern id="grid" x="871" y="915" width="80" height="80" patternUnits="userSpaceOnUse"><rect x="19" y="0" width="2" height="80" fill="#f5f5f5"/><rect x="39" y="0" width="2" height="80" fill="#f5f5f5"/><rect x="59" y="0" width="2" height="80" fill="#f5f5f5"/><rect x="0" y="19" width="80" height="2" fill="#f5f5f5"/><rect x="0" y="39" width="80" height="2" fill="#f5f5f5"/><rect x="0" y="59" width="80" height="2" fill="#f5f5f5"/><rect x="0" y="0" width="1" height="80" fill="#d0d0d0"/><rect x="0" y="0" width="80" height="1" fill="#d0d0d0"/></pattern><filter id="tipshadow" x="-20%" y="-20%" width="140%" height="140%"><feDropShadow dx="0" dy="2" stdDeviation="6" flood-color="#000" flood-opacity="0.16"/></filter><linearGradient id="colg" x1="0" y1="0" x2="0" y2="1"><stop offset="0" stop-color="#f4fbff"/><stop offset="0.5" stop-color="#e8eef2"/><stop offset="1" stop-color="#9aa8b4"/></linearGradient></defs>
<rect x="612" y="202" width="2742" height="1596" fill="url(#grid)"/>
<g><rect x="872" y="876" width="40" height="880" fill="#fff"/><rect x="872" y="876" width="2420" height="880" fill="none" stroke="#000" stroke-width="2"/><path d="M912,876 L912,1756" stroke="#000" stroke-width="2"/><rect x="912" y="876" width="40" height="240" fill="#dae8fc" stroke="#6c8ebf" stroke-width="2"/><rect x="912" y="876" width="2380" height="240" fill="none" stroke="#6c8ebf" stroke-width="2"/><rect x="912" y="1116" width="40" height="360" fill="#d5e8d4" stroke="#82b366" stroke-width="2"/><rect x="912" y="1116" width="2380" height="360" fill="none" stroke="#82b366" stroke-width="2"/><rect x="912" y="1476" width="40" height="280" fill="#ffe6cc" stroke="#d79b00" stroke-width="2"/><rect x="912" y="1476" width="2380" height="280" fill="none" stroke="#d79b00" stroke-width="2"/><rect x="881.5" y="885.5" width="17" height="17" rx="2" fill="url(#colg)" stroke="#7d97ad" stroke-width="1.2"/><rect x="885.5" y="892.5" width="9" height="3.2" rx="1.4" fill="#222"/><rect x="921.5" y="885.5" width="17" height="17" rx="2" fill="url(#colg)" stroke="#7d97ad" stroke-width="1.2"/><rect x="925.5" y="892.5" width="9" height="3.2" rx="1.4" fill="#222"/><rect x="921.5" y="1125.5" width="17" height="17" rx="2" fill="url(#colg)" stroke="#7d97ad" stroke-width="1.2"/><rect x="925.5" y="1132.5" width="9" height="3.2" rx="1.4" fill="#222"/><rect x="921.5" y="1485.5" width="17" height="17" rx="2" fill="url(#colg)" stroke="#7d97ad" stroke-width="1.2"/><rect x="925.5" y="1492.5" width="9" height="3.2" rx="1.4" fill="#222"/><text x="0" y="0" font-size="24.3" font-weight="bold" text-anchor="middle" transform="translate(898.6,1313.0) rotate(-90)">Items'R'us</text><text x="0" y="0" font-size="24.3" font-weight="bold" text-anchor="middle" transform="translate(939.4,993.5) rotate(-90)">Accounts</text><text x="0" y="0" font-size="24.3" font-weight="bold" text-anchor="middle" transform="translate(939.4,1293.5) rotate(-90)">Warehouse</text><text x="0" y="0" font-size="24.3" font-weight="bold" text-anchor="middle" transform="translate(939.4,1613.5) rotate(-90)">Purchasing</text><circle cx="1122" cy="976" r="30" fill="#fff" stroke="#000" stroke-width="2"/><rect x="1101.00" y="964.00" width="42.00" height="24.00" fill="none" stroke="#000" stroke-width="2"/><path d="M1101.00,964.00 L1122.00,976.50 L1143.00,964.00" fill="none" stroke="#000" stroke-width="2"/><rect x="1040.7" y="1018.7" width="162.7" height="29" fill="#fff"/><text x="1122" y="1039.7" font-size="24" fill="#000" text-anchor="middle" font-weight="normal" >Order received</text><path d="M1272,926 L1412,926 A20,20 0 0 1 1432,946 L1432,1026 A20,20 0 0 1 1412,1046 L1272,1046 A20,20 0 0 1 1252,1026 L1252,946 A20,20 0 0 1 1272,926 Z" fill="#fff" stroke="#000" stroke-width="2"/><text x="1342.0" y="981.0" font-size="24" fill="#000" text-anchor="middle" font-weight="normal" >Check</text><text x="1342.0" y="1009.0" font-size="24" fill="#000" text-anchor="middle" font-weight="normal" >availability</text><path d="M1263.50,932.00 L1292.00,932.00 C1284.00,938.00 1283.00,946.00 1289.00,952.00 C1296.00,958.00 1295.00,964.00 1290.00,968.40 L1261.50,968.40 C1268.00,963.00 1270.00,957.00 1264.00,951.00 C1257.00,944.00 1257.00,937.00 1263.50,932.00 Z" fill="#fff" stroke="#000" stroke-width="2"/><path d="M1266.50,935.60 L1281.50,935.60 M1265.50,942.80 L1280.50,942.80 M1269.50,950.00 L1284.50,950.00 M1273.50,957.30 L1288.50,957.30 M1272.50,964.30 L1287.50,964.30" stroke="#000" stroke-width="2"/><circle cx="1562" cy="986" r="30" fill="#fff" stroke="#000" stroke-width="2"/><circle cx="1562" cy="986" r="26" fill="none" stroke="#000" stroke-width="2"/><polygon points="1562.00,968.00 1579.50,981.00 1573.00,1000.00 1551.00,1000.00 1544.50,981.00" fill="none" stroke="#000" stroke-width="2" stroke-linejoin="miter"/><rect x="1459.3" y="1028.7" width="205.4" height="29" fill="#fff"/><text x="1562" y="1049.7" font-size="24" fill="#000" text-anchor="middle" font-weight="normal" >Items in inventory?</text><path d="M2812,916 L2952,916 A20,20 0 0 1 2972,936 L2972,1016 A20,20 0 0 1 2952,1036 L2812,1036 A20,20 0 0 1 2792,1016 L2792,936 A20,20 0 0 1 2812,916 Z" fill="#fff" stroke="#000" stroke-width="2"/><text x="2882.0" y="985.0" font-size="24" fill="#000" text-anchor="middle" font-weight="normal" >Send invoice</text><rect x="2801" y="925" width="34" height="24" fill="#000"/><path d="M2801.5,925.5 L2818,937 L2834.5,925.5" fill="none" stroke="#fff" stroke-width="2.2"/><circle cx="3082" cy="976" r="30" fill="#fff" stroke="#000" stroke-width="2"/><circle cx="3082" cy="976" r="26" fill="none" stroke="#000" stroke-width="2"/><circle cx="3082.00" cy="976.00" r="23.60" fill="#fff" stroke="#000" stroke-width="2"/><path d="M3105.60,976.00 L3102.10,976.00 M3102.44,987.80 L3099.41,986.05 M3093.80,996.44 L3092.05,993.41 M3082.00,999.60 L3082.00,996.10 M3070.20,996.44 L3071.95,993.41 M3061.56,987.80 L3064.59,986.05 M3058.40,976.00 L3061.90,976.00 M3061.56,964.20 L3064.59,965.95 M3070.20,955.56 L3071.95,958.59 M3082.00,952.40 L3082.00,955.90 M3093.80,955.56 L3092.05,958.59 M3102.44,964.20 L3099.41,965.95" stroke="#000" stroke-width="1.8"/><path d="M3083.00,956.50 L3082.00,976.00 L3095.00,976.50" fill="none" stroke="#000" stroke-width="2"/><rect x="2995.9" y="1018.7" width="172.1" height="29" fill="#fff"/><text x="3082" y="1039.7" font-size="24" fill="#000" text-anchor="middle" font-weight="normal" >Payment period</text><circle cx="3222" cy="976" r="30.5" fill="#fff" stroke="#000" stroke-width="5"/><circle cx="3222" cy="976" r="25.7" fill="#000"/><path d="M2572,1156 L2712,1156 A20,20 0 0 1 2732,1176 L2732,1256 A20,20 0 0 1 2712,1276 L2572,1276 A20,20 0 0 1 2552,1256 L2552,1176 A20,20 0 0 1 2572,1156 Z" fill="#fff" stroke="#000" stroke-width="2"/><text x="2642.0" y="1211.0" font-size="24" fill="#000" text-anchor="middle" font-weight="normal" >Update</text><text x="2642.0" y="1239.0" font-size="24" fill="#000" text-anchor="middle" font-weight="normal" >inventory</text><path d="M2563.00,1162.00 L2576.00,1162.00 Q2579.00,1162.00 2579.00,1164.50 L2579.00,1167.00 L2591.50,1167.00 Q2594.30,1167.00 2594.30,1170.00 Q2594.30,1173.00 2591.50,1173.00 Q2594.50,1173.00 2594.50,1176.00 Q2594.50,1179.00 2591.50,1179.00 Q2593.00,1179.00 2593.00,1182.00 Q2593.00,1185.00 2590.00,1185.00 Q2590.00,1185.00 2590.00,1187.50 Q2590.00,1189.60 2587.50,1189.60 L2562.50,1189.60 Q2558.00,1189.60 2558.00,1185.00 L2558.00,1168.00 Q2558.00,1162.00 2563.00,1162.00 Z" fill="#fff" stroke="#000" stroke-width="2" stroke-linejoin="round"/><path d="M2568.50,1167.00 L2591.00,1167.00 M2576.30,1173.00 L2591.50,1173.00 M2577.40,1179.00 L2591.50,1179.00 M2577.40,1185.00 L2590.00,1185.00" stroke="#000" stroke-width="2" stroke-linecap="round"/><path d="M2312,1316 L2452,1316 A20,20 0 0 1 2472,1336 L2472,1416 A20,20 0 0 1 2452,1436 L2312,1436 A20,20 0 0 1 2292,1416 L2292,1336 A20,20 0 0 1 2312,1316 Z" fill="#fff" stroke="#000" stroke-width="2"/><text x="2382.0" y="1385.0" font-size="24" fill="#000" text-anchor="middle" font-weight="normal" >Pack items</text><path d="M2303.00,1322.00 L2316.00,1322.00 Q2319.00,1322.00 2319.00,1324.50 L2319.00,1327.00 L2331.50,1327.00 Q2334.30,1327.00 2334.30,1330.00 Q2334.30,1333.00 2331.50,1333.00 Q2334.50,1333.00 2334.50,1336.00 Q2334.50,1339.00 2331.50,1339.00 Q2333.00,1339.00 2333.00,1342.00 Q2333.00,1345.00 2330.00,1345.00 Q2330.00,1345.00 2330.00,1347.50 Q2330.00,1349.60 2327.50,1349.60 L2302.50,1349.60 Q2298.00,1349.60 2298.00,1345.00 L2298.00,1328.00 Q2298.00,1322.00 2303.00,1322.00 Z" fill="#fff" stroke="#000" stroke-width="2" stroke-linejoin="round"/><path d="M2308.50,1327.00 L2331.00,1327.00 M2316.30,1333.00 L2331.50,1333.00 M2317.40,1339.00 L2331.50,1339.00 M2317.40,1345.00 L2330.00,1345.00" stroke="#000" stroke-width="2" stroke-linecap="round"/><path d="M2572,1316 L2712,1316 A20,20 0 0 1 2732,1336 L2732,1416 A20,20 0 0 1 2712,1436 L2572,1436 A20,20 0 0 1 2552,1416 L2552,1336 A20,20 0 0 1 2572,1316 Z" fill="#fff" stroke="#000" stroke-width="2"/><text x="2642.0" y="1385.0" font-size="24" fill="#000" text-anchor="middle" font-weight="normal" >Send parcel</text><path d="M2563.00,1322.00 L2576.00,1322.00 Q2579.00,1322.00 2579.00,1324.50 L2579.00,1327.00 L2591.50,1327.00 Q2594.30,1327.00 2594.30,1330.00 Q2594.30,1333.00 2591.50,1333.00 Q2594.50,1333.00 2594.50,1336.00 Q2594.50,1339.00 2591.50,1339.00 Q2593.00,1339.00 2593.00,1342.00 Q2593.00,1345.00 2590.00,1345.00 Q2590.00,1345.00 2590.00,1347.50 Q2590.00,1349.60 2587.50,1349.60 L2562.50,1349.60 Q2558.00,1349.60 2558.00,1345.00 L2558.00,1328.00 Q2558.00,1322.00 2563.00,1322.00 Z" fill="#fff" stroke="#000" stroke-width="2" stroke-linejoin="round"/><path d="M2568.50,1327.00 L2591.00,1327.00 M2576.30,1333.00 L2591.50,1333.00 M2577.40,1339.00 L2591.50,1339.00 M2577.40,1345.00 L2590.00,1345.00" stroke="#000" stroke-width="2" stroke-linecap="round"/><path d="M1462,1516 L1662,1516 A20,20 0 0 1 1682,1536 L1682,1656 A20,20 0 0 1 1662,1676 L1462,1676 A20,20 0 0 1 1442,1656 L1442,1536 A20,20 0 0 1 1462,1516 Z" fill="#fff" stroke="#000" stroke-width="2"/><text x="1562" y="1577" font-size="24" fill="#000" text-anchor="middle" font-weight="normal" >Procure items</text><text x="1562" y="1605" font-size="24" fill="#000" text-anchor="middle" font-weight="normal" >from suppliers</text><rect x="1548" y="1648" width="28" height="28" fill="#fff" stroke="#000" stroke-width="2"/><path d="M1562,1656 L1562,1667.8 M1556,1661.9 L1568,1661.9" stroke="#000" stroke-width="2"/><circle cx="1491.7" cy="1665.7" r="30" fill="#fff" stroke="#000" stroke-width="2" stroke-dasharray="6 6"/><circle cx="1491.7" cy="1665.7" r="26" fill="none" stroke="#000" stroke-width="2" stroke-dasharray="6 6"/><polygon points="1491.70,1644.70 1510.30,1678.70 1491.70,1661.90 1473.10,1678.70" fill="none" stroke="#000" stroke-width="2" stroke-linejoin="miter"/><circle cx="1631.9" cy="1665.7" r="30" fill="#fff" stroke="#000" stroke-width="2"/><circle cx="1631.9" cy="1665.7" r="26" fill="none" stroke="#000" stroke-width="2"/><polygon points="1613.30,1682.40 1626.30,1653.50 1636.60,1669.40 1649.60,1650.70 1637.50,1679.60 1627.30,1664.70" fill="none" stroke="#000" stroke-width="2" stroke-linejoin="miter"/><path d="M1812,1536 L1952,1536 A20,20 0 0 1 1972,1556 L1972,1636 A20,20 0 0 1 1952,1656 L1812,1656 A20,20 0 0 1 1792,1636 L1792,1556 A20,20 0 0 1 1812,1536 Z" fill="#fff" stroke="#000" stroke-width="2"/><text x="1882.0" y="1577.0" font-size="24" fill="#000" text-anchor="middle" font-weight="normal" >Update</text><text x="1882.0" y="1605.0" font-size="24" fill="#000" text-anchor="middle" font-weight="normal" >product list and</text><text x="1882.0" y="1633.0" font-size="24" fill="#000" text-anchor="middle" font-weight="normal" >inventory</text><path d="M1803.00,1542.00 L1816.00,1542.00 Q1819.00,1542.00 1819.00,1544.50 L1819.00,1547.00 L1831.50,1547.00 Q1834.30,1547.00 1834.30,1550.00 Q1834.30,1553.00 1831.50,1553.00 Q1834.50,1553.00 1834.50,1556.00 Q1834.50,1559.00 1831.50,1559.00 Q1833.00,1559.00 1833.00,1562.00 Q1833.00,1565.00 1830.00,1565.00 Q1830.00,1565.00 1830.00,1567.50 Q1830.00,1569.60 1827.50,1569.60 L1802.50,1569.60 Q1798.00,1569.60 1798.00,1565.00 L1798.00,1548.00 Q1798.00,1542.00 1803.00,1542.00 Z" fill="#fff" stroke="#000" stroke-width="2" stroke-linejoin="round"/><path d="M1808.50,1547.00 L1831.00,1547.00 M1816.30,1553.00 L1831.50,1553.00 M1817.40,1559.00 L1831.50,1559.00 M1817.40,1565.00 L1830.00,1565.00" stroke="#000" stroke-width="2" stroke-linecap="round"/><path d="M2072,1536 L2212,1536 A20,20 0 0 1 2232,1556 L2232,1636 A20,20 0 0 1 2212,1656 L2072,1656 A20,20 0 0 1 2052,1636 L2052,1556 A20,20 0 0 1 2072,1536 Z" fill="#fff" stroke="#000" stroke-width="2"/><text x="2142.0" y="1605.0" font-size="24" fill="#000" text-anchor="middle" font-weight="normal" >Inform client</text><rect x="2061" y="1545" width="34" height="24" fill="#000"/><path d="M2061.5,1545.5 L2078,1557 L2094.5,1545.5" fill="none" stroke="#fff" stroke-width="2.2"/></g>
<rect x="628" y="955" width="182" height="288" rx="10" fill="#fafafa" filter="url(#tipshadow)"/>
<circle cx="715.2" cy="1038" r="49.6" fill="#fff" stroke="#000" stroke-width="2"/>
<rect x="680" y="1018.2" width="70" height="39.5" fill="none" stroke="#000" stroke-width="2"/><path d="M680,1018.2 L715,1038.3 L750,1018.2" fill="none" stroke="#000" stroke-width="2"/>
<rect x="628" y="1130" width="182" height="2.2" fill="#7a7a7a"/>
<text x="719.3" y="1166" font-size="28" fill="#000" text-anchor="middle" font-weight="normal" >Message</text>
<text x="719.3" y="1195" font-size="28" fill="#000" text-anchor="middle" font-weight="normal" >Start,</text>
<text x="719.3" y="1224" font-size="28" fill="#000" text-anchor="middle" font-weight="normal" >Interrupting</text></svg></body></html>
